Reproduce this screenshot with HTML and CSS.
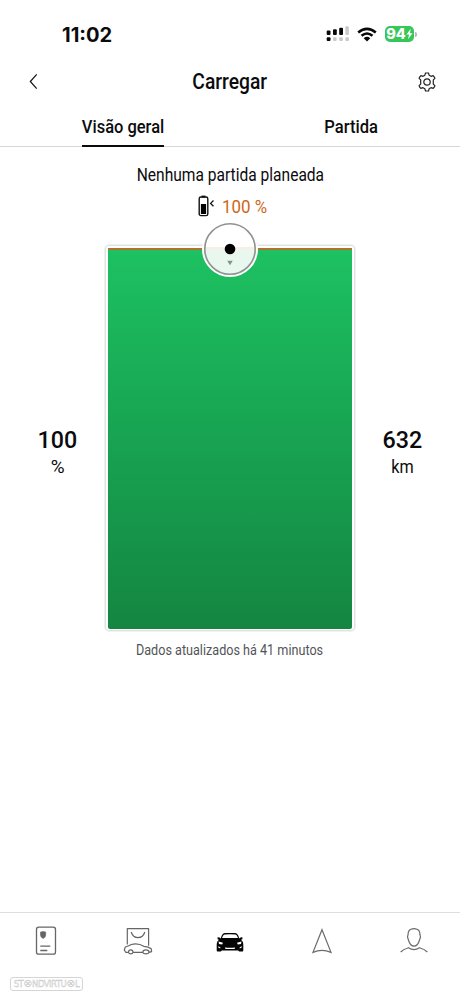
FILE: index.html
```html
<!DOCTYPE html>
<html lang="pt">
<head>
<meta charset="utf-8">
<title>Carregar</title>
<link rel="stylesheet" href="styles.css">
</head>
<body>
<div class="status">
  <span class="clock">11:02</span>
  <div class="indicators">
    <svg class="signal" width="24" height="16" viewBox="0 0 24 16">
      <g fill="#080808"><rect x="0.7" y="4.5" width="3.8" height="4.4" rx="1"/><rect x="7" y="3.2" width="3.8" height="5.7" rx="1"/><rect x="13.2" y="1.7" width="3.8" height="7.2" rx="1"/><rect x="0.7" y="11.2" width="3.8" height="3.9" rx="1"/></g>
      <g fill="#c8c8c8"><rect x="19.4" y="0.3" width="3.4" height="8.6" rx="1"/><rect x="7" y="11.2" width="3.6" height="3.9" rx="1"/><rect x="13.2" y="11.2" width="3.6" height="3.9" rx="1"/><rect x="19.4" y="11.2" width="3.6" height="3.9" rx="1"/></g>
    </svg>
    <svg class="wifi" width="20" height="15" viewBox="0 0 20 15">
      <path d="M1.200 5.500Q10-1.800 18.800 5.500M4.500 8.800Q10 4.200 15.500 8.800" fill="none" stroke="#080808" stroke-width="2.600"/>
      <path d="M6.700 11.200Q10 8.500 13.300 11.200L10 14.600Z" fill="#080808"/>
    </svg>
    <div class="battery"><span>94</span><svg width="7" height="12" viewBox="0 0 7 12"><path d="M4.800.8.400 6.600h2.700L2 11.300l4.500-6.100H3.800Z" fill="#fff"/></svg></div>
    <i class="battery-cap"></i>
  </div>
</div>
<header class="header">
  <svg class="back" width="9" height="17" viewBox="0 0 9 17"><path d="M7.700 1.300 1.300 8.500l6.400 7.200" fill="none" stroke="#111" stroke-width="1.200"/></svg>
  <h1 class="title">Carregar</h1>
  <svg class="gear" width="20" height="20" viewBox="0 0 20 20" fill="none" stroke="#222" stroke-width="1.200" stroke-linejoin="round">
    <path d="M8.500 1h3l.6 2.200 1.900 1.100 2.200-.6q1 .8 1.700 2.600l-1.600 1.600v4.200l1.600 1.600q-.7 1.800-1.700 2.600l-2.200-.6-1.900 1.100-.6 2.200h-3l-.6-2.200L6 15.700l-2.200.6q-1-.8-1.700-2.600l1.600-1.600V7.900L2.100 6.300q.7-1.800 1.700-2.600l2.200.6 1.900-1.100Z"/>
    <circle cx="10" cy="10" r="3.200"/>
  </svg>
</header>
<nav class="tabs">
  <div class="tab"><div class="tab-active"><span class="tab-label overview">Visão geral</span></div></div>
  <div class="tab"><span class="tab-label departure">Partida</span></div>
</nav>
<main class="main">
  <p class="message"><span>Nenhuma partida planeada</span></p>
  <div class="target">
    <svg width="17" height="22" viewBox="0 0 17 22">
      <path d="M3.500.6h4v2h-4z" fill="#111"/>
      <rect x="1.200" y="2" width="8.600" height="18.600" rx="1.700" fill="none" stroke="#111" stroke-width="1.400"/>
      <path d="M2.900 9h5.200v10H2.900z" fill="#000"/>
      <path d="M15.500 5.500 12.600 8.400l2.900 2.900" fill="none" stroke="#111" stroke-width="1.300"/>
    </svg>
    <span class="target-value">100 %</span>
  </div>
  <section class="charge">
    <div class="metric"><b>100</b><span class="unit-percent">%</span></div>
    <div class="gauge">
      <div class="gauge-fill"></div>
      <div class="knob">
        <svg width="52" height="52" viewBox="0 0 52 52"><circle cx="26" cy="26" r="25.200" fill="none" stroke="#8e9390" stroke-width="1.600"/><circle cx="26" cy="26" r="5.300" fill="#000"/><path d="M23.200 37.700h5.600L26 42.300Z" fill="#87918c"/></svg>
      </div>
    </div>
    <div class="metric"><b>632</b><span class="unit-km">km</span></div>
  </section>
  <p class="updated"><span>Dados atualizados há 41 minutos</span></p>
</main>
<footer class="bottom">
  <div class="nav">
    <svg width="32" height="32" viewBox="0 0 32 32" fill="none" stroke="#666" stroke-width="1.300">
      <rect x="6.500" y="2.200" width="19" height="27" rx="2.200"/><path d="M10.300 21.200h10M10.300 25.500h7"/><path d="M10.500 7.100q2.600-1 5.200 0v3q0 2.300-2.600 3.400-2.600-1.100-2.600-3.400Z" fill="#666" stroke-width=".6"/>
    </svg>
    <svg width="32" height="32" viewBox="0 0 32 32" fill="none" stroke="#666" stroke-width="1.200" stroke-linejoin="round">
      <path d="M5.300 19.500V3.700h21.300v17M9.200 7q1.700 5.600 6.800 5.600T22.800 7"/>
      <path d="M6.500 27.300H3.700L2.300 25l1-3q4-1.200 6-2.500 6.500-2 12.500 1.800 5 .2 7.400 2.400l.4 2.900-2.600.7M11 27.300h9.800M6.500 27.300q0-2.400 2.250-2.400T11 27.300q-.4 1.500-2.250 1.500T6.500 27.300Zm14.300 0q0-2.400 3.100-2.400t3.100 2.400q-.4 1.500-3.100 1.500t-3.100-1.500Z"/>
    </svg>
    <svg width="32" height="32" viewBox="0 0 32 32">
      <path d="M7.800 10.500q.9-2.200 2.900-2.400 5.300-.4 10.600 0 2 .2 2.900 2.400l1.200 3q.8-1.300 3-1.200v1.900l-1.300.6q2.200 1.700 2.200 4.600v6.200q0 .9-.9.900h-3q-.9 0-1-.9H7.600q-.1.900-1 .9h-3q-.9 0-.9-.9v-6.200q0-2.900 2.200-4.600l-1.300-.6v-1.900q2.200-.1 3 1.200Z" fill="#050505"/>
      <path d="M8 13.100q1-3.400 2.500-3.600 5.500-.5 11 0 1.500.2 2.500 3.600-8-.3-16 0Z" fill="#fff"/>
      <path d="m4.500 16.500 4.500 1.300-.8 1.700-3.200-.5Zm23 0-4.500 1.300.8 1.700 3.200-.5ZM4.300 21.200l2 1v1.200l-2-.8Zm23.400 0-2 1v1.200l2-.8ZM10.800 22.500q5.200.6 10.400 0l-.7 1.500h-9Z" fill="#fff"/>
    </svg>
    <svg width="32" height="32" viewBox="0 0 32 32" fill="none" stroke="#6c6c6c" stroke-width="1.200"><path d="m16 4.700 9 22.700q-9-4-18 0Z"/></svg>
    <svg width="32" height="32" viewBox="0 0 32 32" fill="none" stroke="#6c6c6c" stroke-width="1.200"><path d="M13 4.300q3-1.200 6 0 3 1.200 2.900 5.200l.6 2.400-.8 2.600q-1.800 6.600-5.700 6.700-3.900-.1-5.700-6.700l-.8-2.600.6-2.400q-.1-4 2.900-5.200ZM2.700 27q2.300-2.600 7.800-4.300 5.500 3.800 11 0 5.500 1.700 7.800 4.300"/></svg>
  </div>
  <div class="watermark">ST<i>⊗</i>NDVIRTU<i>⊗</i>L</div>
</footer>
</body>
</html>
```
FILE: styles.css
```css
* { box-sizing: border-box; }
body { margin: 0; width: 460px; height: 1000px; overflow: hidden; display: flex; flex-direction: column; background: #fff; color: #0b0b0d; font-family: Roboto, "Liberation Sans", sans-serif; }
h1, p { margin: 0; }
span { display: inline-block; white-space: nowrap; }
.status { height: 56px; padding: 12px 43px 0 62px; display: flex; align-items: center; justify-content: space-between; }
.clock { padding-top: 1px; font: 700 19.5px/24px Inter, sans-serif; transform: scaleX(1.03); transform-origin: left; }
.indicators { display: flex; align-items: center; }
.wifi { margin-left: 7px; }
.battery { margin-left: 8px; width: 29px; height: 16px; border-radius: 5px; background: #35c759; color: #fff; display: flex; align-items: center; justify-content: center; font: 800 14.5px/16px Inter, sans-serif; }
.battery-cap { width: 2px; height: 5px; margin-left: 1px; border-radius: 0 2px 2px 0; background: #b9b9b9; }
.header { height: 51px; padding: 0 23px 0 29px; display: grid; grid-template-columns: 60px 1fr 66px; align-items: center; }
.gear { justify-self: end; }
.title { justify-self: center; font-size: 22px; font-weight: 500; line-height: 26px; transform: scaleX(.875); }
.tabs { height: 40px; padding-left: 8px; display: grid; grid-template-columns: 229px 228px; border-bottom: 1px solid #d8d8d8; }
.tab { display: flex; justify-content: center; font-size: 18px; font-weight: 500; line-height: 39px; }
.tab-active { width: 84px; height: 40px; padding-left: 1px; display: flex; justify-content: center; background: linear-gradient(#0b0b0d, #0b0b0d) 1px 100% / 82px 2px no-repeat; }
.overview { transform: scaleX(.915); }
.departure { transform: scaleX(.92); }
.main { flex: 1; text-align: center; }
.message { padding-top: 16px; font-size: 18px; line-height: 24px; }
.message span { transform: scaleX(.864); }
.target { height: 37px; padding: 1px 0 0 5px; display: flex; justify-content: center; align-items: center; gap: 7px; color: #cd6719; font-size: 19px; }
.target-value { width: 46px; transform: scaleX(.89); transform-origin: left; text-align: left; }
.charge { height: 388px; margin-top: 20px; display: grid; grid-template-columns: 93px 252px 93px; justify-content: center; align-items: center; }
.metric { display: flex; flex-direction: column; align-items: center; padding-top: 28px; }
.metric b { font-size: 24px; font-weight: 500; line-height: 30px; transform: scaleX(.97); }
.metric span { font-size: 18px; line-height: 24px; }
.unit-km { transform: scaleX(.9); }
.unit-percent { transform: scaleX(1.05); }
.gauge { position: relative; height: 388px; padding: 3px; border: 1px solid #f0f1f0; border-radius: 5px; box-shadow: inset 0 0 0 1px #dce5df; }
.gauge-fill { height: 381px; border-top: 2px solid #b4712c; border-radius: 0 0 2px 2px; background: linear-gradient(#1dc162, #18a452 48%, #148641) padding-box; }
.knob { position: absolute; left: 97px; top: -24px; width: 56px; height: 56px; border: 2px solid #fff; border-radius: 50%; background: linear-gradient(#fff 24px, #fbede3 24px, #fbede3 26px, #e8f8ef 26px); }
.knob svg { display: block; }
.updated { padding-top: 7px; color: #535457; font-size: 14.5px; line-height: 24px; }
.updated span { transform: scaleX(.87); }
.bottom { height: 88px; border-top: 1px solid #dedede; }
.nav { height: 60px; display: grid; grid-template-columns: repeat(5, 92px); justify-items: center; align-items: center; padding-bottom: 4px; }
.watermark { margin: 4px 0 0 10px; width: 73px; height: 14px; display: flex; justify-content: center; border: 1px solid #d5d5d5; border-radius: 3px; color: #fff; font: 400 8.5px/12px "DejaVu Sans", sans-serif; letter-spacing: -.5px; white-space: nowrap; -webkit-text-stroke: .4px #c3c3c3; }
.watermark i { font-size: 11px; font-style: normal; color: #c8c8c8; -webkit-text-stroke: 0; }
```
